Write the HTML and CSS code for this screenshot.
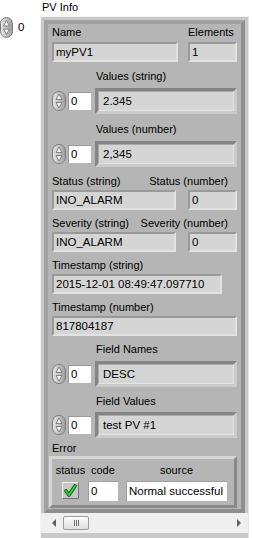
FILE: index.html
```html
<!DOCTYPE html>
<html lang="en">
<head>
    <meta charset="UTF-8">
    <title>PV Info</title>
    <link rel="stylesheet" href="styles.css">
</head>
<body>
    <!-- shared gradients for the spinners -->
    <svg class="defs" width="0" height="0">
        <defs>
            <linearGradient id="spinFill" x1="0" y1="0" x2="1" y2="0">
                <stop offset="0" stop-color="#e6e6e6"/>
                <stop offset="0.5" stop-color="#c4c4c4"/>
                <stop offset="1" stop-color="#9c9c9c"/>
            </linearGradient>
        </defs>
    </svg>

    <div class="title">PV Info</div>

    <div class="main">
        <!-- array index -->
        <div class="index">
            <svg class="spin" width="13" height="21" viewBox="0 0 13 21">
                <rect x="0.5" y="0.5" width="12" height="20" rx="6" fill="url(#spinFill)" stroke="#7c7c7c"/>
                <path d="M6.5 3.5 L9.5 9 H3.5 Z" fill="#f2f2f2" stroke="#6c6c6c" stroke-width="0.8"/>
                <path d="M3.5 12 H9.5 L6.5 17.5 Z" fill="#f2f2f2" stroke="#6c6c6c" stroke-width="0.8"/>
            </svg>
            <div class="idx">0</div>
        </div>

        <!-- array of PV clusters -->
        <div class="array">
            <div class="cluster">
                <div class="row first">
                    <div class="col name-col">
                        <div class="label">Name</div>
                        <div class="str">myPV1</div>
                    </div>
                    <div class="col num-col">
                        <div class="label">Elements</div>
                        <div class="str">1</div>
                    </div>
                </div>

                <div class="afield f-vstr">
                    <div class="label alabel">Values (string)</div>
                    <div class="arow">
                        <svg class="spin" width="14" height="20" viewBox="0 0 14 20">
                            <rect x="0.5" y="0.5" width="13" height="19" rx="6.5" fill="url(#spinFill)" stroke="#7c7c7c"/>
                            <path d="M7 3 L10 8.5 H4 Z" fill="#f2f2f2" stroke="#6c6c6c" stroke-width="0.8"/>
                            <path d="M4 11.5 H10 L7 17 Z" fill="#f2f2f2" stroke="#6c6c6c" stroke-width="0.8"/>
                        </svg>
                        <div class="num">0</div>
                        <div class="aframe"><div class="str">2.345</div></div>
                    </div>
                </div>

                <div class="afield f-vnum">
                    <div class="label alabel">Values (number)</div>
                    <div class="arow">
                        <svg class="spin" width="14" height="20" viewBox="0 0 14 20">
                            <rect x="0.5" y="0.5" width="13" height="19" rx="6.5" fill="url(#spinFill)" stroke="#7c7c7c"/>
                            <path d="M7 3 L10 8.5 H4 Z" fill="#f2f2f2" stroke="#6c6c6c" stroke-width="0.8"/>
                            <path d="M4 11.5 H10 L7 17 Z" fill="#f2f2f2" stroke="#6c6c6c" stroke-width="0.8"/>
                        </svg>
                        <div class="num">0</div>
                        <div class="aframe"><div class="str">2,345</div></div>
                    </div>
                </div>

                <div class="row f-status">
                    <div class="col status-col">
                        <div class="label">Status (string)</div>
                        <div class="str">INO_ALARM</div>
                    </div>
                    <div class="col num-col">
                        <div class="label rlabel"><span>Status (number)</span></div>
                        <div class="str">0</div>
                    </div>
                </div>

                <div class="row f-sev">
                    <div class="col status-col">
                        <div class="label">Severity (string)</div>
                        <div class="str">INO_ALARM</div>
                    </div>
                    <div class="col num-col">
                        <div class="label rlabel"><span>Severity (number)</span></div>
                        <div class="str">0</div>
                    </div>
                </div>

                <div class="field f-tss">
                    <div class="label">Timestamp (string)</div>
                    <div class="str ts">2015-12-01 08:49:47.097710</div>
                </div>

                <div class="field f-tsn">
                    <div class="label">Timestamp (number)</div>
                    <div class="str">817804187</div>
                </div>

                <div class="afield f-names">
                    <div class="label alabel">Field Names</div>
                    <div class="arow">
                        <svg class="spin" width="14" height="20" viewBox="0 0 14 20">
                            <rect x="0.5" y="0.5" width="13" height="19" rx="6.5" fill="url(#spinFill)" stroke="#7c7c7c"/>
                            <path d="M7 3 L10 8.5 H4 Z" fill="#f2f2f2" stroke="#6c6c6c" stroke-width="0.8"/>
                            <path d="M4 11.5 H10 L7 17 Z" fill="#f2f2f2" stroke="#6c6c6c" stroke-width="0.8"/>
                        </svg>
                        <div class="num">0</div>
                        <div class="aframe"><div class="str">DESC</div></div>
                    </div>
                </div>

                <div class="afield f-values">
                    <div class="label alabel">Field Values</div>
                    <div class="arow">
                        <svg class="spin" width="14" height="20" viewBox="0 0 14 20">
                            <rect x="0.5" y="0.5" width="13" height="19" rx="6.5" fill="url(#spinFill)" stroke="#7c7c7c"/>
                            <path d="M7 3 L10 8.5 H4 Z" fill="#f2f2f2" stroke="#6c6c6c" stroke-width="0.8"/>
                            <path d="M4 11.5 H10 L7 17 Z" fill="#f2f2f2" stroke="#6c6c6c" stroke-width="0.8"/>
                        </svg>
                        <div class="num">0</div>
                        <div class="aframe"><div class="str">test PV #1</div></div>
                    </div>
                </div>

                <!-- error cluster -->
                <div class="label err-label">Error</div>
                <div class="errc">
                    <div class="ecol e-status">
                        <div class="elabel">status</div>
                        <svg class="check" width="17" height="17" viewBox="0 0 17 17">
                            <rect x="0" y="0" width="17" height="17" fill="#c6c6c6"/>
                            <path d="M0.5 16.5 V0.5 H16.5" fill="none" stroke="#efefef"/>
                            <path d="M0.5 16.5 H16.5 V0.5" fill="none" stroke="#747474"/>
                            <path d="M4 9 L7 13 L13 4" fill="none" stroke="#1f4a1f" stroke-width="3.6" stroke-linecap="round" stroke-linejoin="round"/>
                            <path d="M4 9 L7 13 L13 4" fill="none" stroke="#22e022" stroke-width="1.8" stroke-linecap="round" stroke-linejoin="round"/>
                        </svg>
                    </div>
                    <div class="ecol e-code">
                        <div class="elabel">code</div>
                        <div class="wbox">0</div>
                    </div>
                    <div class="ecol e-source">
                        <div class="elabel center">source</div>
                        <div class="wbox">Normal successful</div>
                    </div>
                </div>
            </div>

            <!-- horizontal scrollbar of the array -->
            <div class="hscroll">
                <span class="arrow left"></span>
                <span class="thumb"><span class="grip"></span></span>
                <span class="track"></span>
                <span class="arrow right"></span>
            </div>
        </div>
    </div>
</body>
</html>
```

FILE: styles.css
```css
/* reset */
* {
    margin: 0;
    padding: 0;
    box-sizing: border-box;
}

body {
    width: 253px;
    height: 538px;
    overflow: hidden;
    background: #ffffff;
    font-family: "Liberation Sans", Arial, sans-serif;
    font-size: 11px;
    color: #000000;
}

.defs {
    position: absolute;
}

/* array label */
.title {
    height: 16px;
    padding-left: 42px;
    line-height: 15px;
}

.main {
    display: flex;
    align-items: flex-start;
}

/* index display on the left */
.index {
    width: 40px;
    margin-top: 1px;
    display: flex;
    align-items: center;
    gap: 2px;
}

.spin {
    display: block;
    flex: none;
}

.idx {
    width: 23px;
    height: 19px;
    line-height: 19px;
    padding-left: 3px;
    background: #ffffff;
    font-size: 11.5px;
}

/* array frame */
.array {
    width: 209px;
    height: 522px;
    border-top: 1px solid #f4f4f4;
    border-left: 1px solid #f4f4f4;
    border-right: 1px solid #e6e6e6;
    background: #c9c9c9;
    padding: 3px 3px 0;
    display: flex;
    flex-direction: column;
}

/* the cluster element */
.cluster {
    border: 4px solid;
    border-color: #a2a2a2 #8e8e8e #8e8e8e #a2a2a2;
    background: #b5b5b5;
    padding: 2px 4px 1px;
}

.label {
    height: 13px;
    line-height: 13px;
    white-space: nowrap;
}

/* plain string indicator */
.str {
    height: 20px;
    line-height: 17px;
    padding-left: 2px;
    background: #d5d5d5;
    border: 2px solid;
    border-color: #999999 #e2e2e2 #e2e2e2 #999999;
    font-size: 11.5px;
    white-space: nowrap;
    overflow: hidden;
}

.row {
    display: flex;
    justify-content: space-between;
}

.col .label {
    margin-bottom: 2px;
}

.row.first .label {
    margin-bottom: 3px;
}

.name-col {
    width: 126px;
}

.status-col {
    width: 124px;
}

.num-col {
    width: 49px;
    flex: none;
}

/* right-aligned labels wider than their indicator */
.rlabel {
    display: flex;
    justify-content: flex-end;
    margin-right: 9px;
}

/* array indicator rows */
.alabel {
    padding-left: 44px;
    margin-bottom: 5px;
}

.arow {
    display: flex;
    align-items: center;
    height: 26px;
}

.num {
    width: 23px;
    height: 18px;
    line-height: 17px;
    margin-left: 2px;
    margin-right: 4px;
    padding-left: 2px;
    background: #ffffff;
    border-top: 1px solid #9a9a9a;
    border-left: 1px solid #9a9a9a;
    font-size: 11.5px;
}

.aframe {
    flex: 1;
    height: 26px;
    border: 3px solid;
    border-color: #858585 #cbcbcb #cbcbcb #858585;
    background: #b0b0b0;
}

.aframe .str {
    border-width: 1px;
    border-color: #a8a8a8 #e4e4e4 #e4e4e4 #a8a8a8;
    padding-left: 4px;
    line-height: 18px;
}

/* vertical placement of each block */
.f-vstr {
    margin-top: 8px;
}

.f-vnum {
    margin-top: 9px;
}

.f-status {
    margin-top: 8px;
}

.f-sev {
    margin-top: 7px;
}

.f-tss,
.f-tsn,
.f-names {
    margin-top: 7px;
}

.field .label {
    margin-bottom: 2px;
}

.f-tss .str {
    width: 170px;
}

.f-values {
    margin-top: 8px;
}

.f-values .alabel {
    margin-bottom: 4px;
}

.err-label {
    margin-top: 4px;
}

/* error cluster */
.errc {
    margin: 1px 0 0 -3px;
    width: 188px;
    height: 52px;
    border: 3px solid;
    border-color: #d6d6d6 #888888 #888888 #d6d6d6;
    background: #b5b5b5;
    padding: 5px 6px 0 3px;
    display: flex;
}

.ecol {
    display: flex;
    flex-direction: column;
}

.elabel {
    height: 13px;
    line-height: 13px;
    margin-bottom: 4px;
}

.elabel.center {
    text-align: center;
}

.e-status {
    width: 31px;
    align-items: center;
}

.check {
    display: block;
    margin-top: 1px;
}

.e-code {
    width: 30px;
    margin-left: 2px;
}

.e-code .elabel {
    padding-left: 3px;
}

.e-source {
    width: 101px;
    margin-left: 8px;
}

.wbox {
    height: 20px;
    line-height: 19px;
    padding-left: 2px;
    background: #ffffff;
    border-top: 1px solid #a0a0a0;
    border-left: 1px solid #a0a0a0;
    font-size: 11.5px;
    white-space: nowrap;
}

/* scrollbar */
.hscroll {
    height: 20px;
    margin: 0 -3px;
    padding: 0 7px 0 11px;
    background: #efefef;
    display: flex;
    align-items: center;
}

.arrow {
    width: 0;
    height: 0;
    border-top: 4px solid transparent;
    border-bottom: 4px solid transparent;
}

.arrow.left {
    border-right: 4px solid #606060;
}

.arrow.right {
    border-left: 4px solid #606060;
}

.thumb {
    width: 26px;
    height: 14px;
    margin-left: 7px;
    border: 1px solid #9c9c9c;
    border-radius: 2px;
    background: linear-gradient(#fbfbfb, #dedede);
    display: flex;
    align-items: center;
    justify-content: center;
}

.grip {
    width: 5px;
    height: 6px;
    background: linear-gradient(to right, #707070 1px, transparent 1px);
    background-size: 2px 100%;
}

.track {
    flex: 1;
}
```
